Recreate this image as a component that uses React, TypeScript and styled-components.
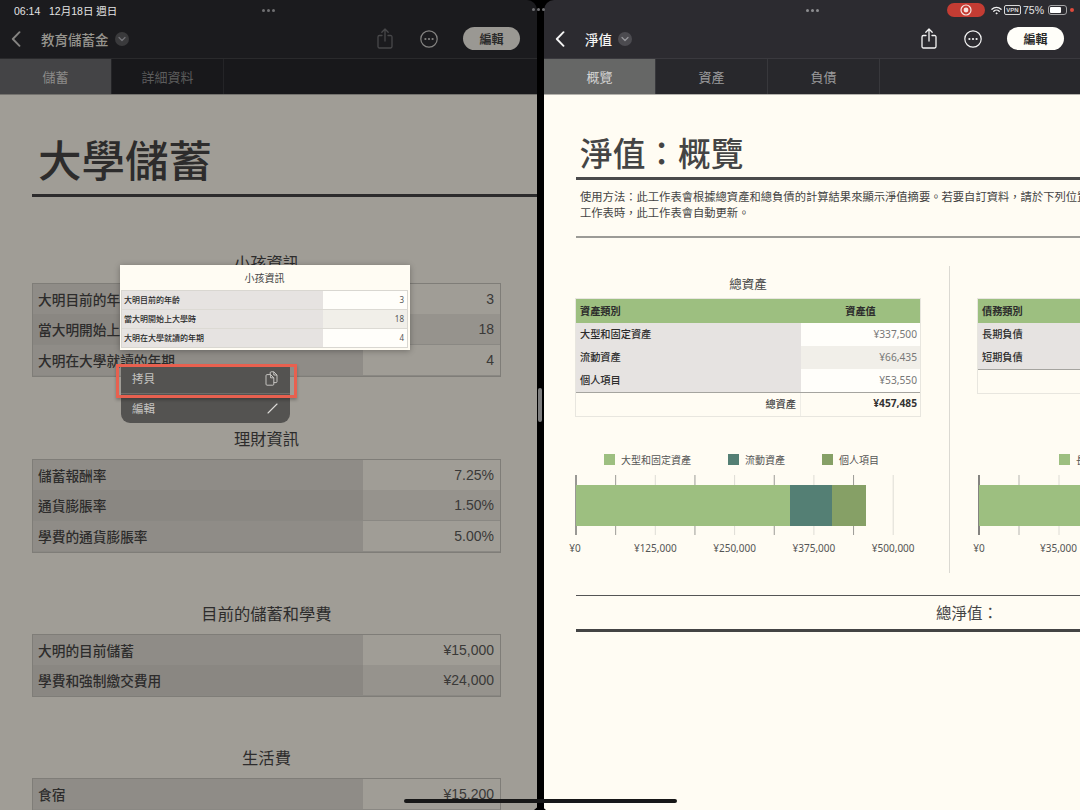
import React from 'react'
import styled, { createGlobalStyle } from 'styled-components'

const GlobalStyle = createGlobalStyle`
  html, body {
    margin: 0;
    padding: 0;
    background: #000;
  }
  * {
    box-sizing: border-box;
  }
`

const font = `"Liberation Sans", "Noto Sans CJK TC", sans-serif`
const cjk = `"Noto Sans CJK TC", "Noto Sans", sans-serif`

const Screen = styled.div`
  position: relative;
  display: flex;
  width: 1080px;
  height: 810px;
  overflow: hidden;
  background: #000;
  font-family: ${cjk};
`

const Pane = styled.div<{ $dim?: boolean }>`
  display: flex;
  flex-direction: column;
  flex: ${p => (p.$dim ? '0 0 537px' : '1 1 0')};
  min-width: 0;
  overflow: hidden;
  border-radius: ${p => (p.$dim ? '0 10px 0 0' : '10px 0 0 0')};
  background: ${p => (p.$dim ? '#1b1b1e' : '#2c2b30')};
`

const Gutter = styled.div`
  flex: 0 0 7px;
  background: #000;
`

const StatusRow = styled.div<{ $dim?: boolean }>`
  display: grid;
  grid-template-columns: 1fr auto 1fr;
  align-items: center;
  height: 20px;
  padding: 0 ${p => (p.$dim ? '14px' : '6px')};
  color: #e4e4e4;
  font-family: ${font};
  font-size: 10.5px;
`

const DotRow = styled.div<{ $dim?: boolean }>`
  display: flex;
  gap: 2px;
  & > i {
    width: 3px;
    height: 3px;
    border-radius: 50%;
    background: ${p => (p.$dim ? '#6f6f72' : '#8d8d90')};
  }
`

const StatusRight = styled.div`
  display: flex;
  align-items: center;
  justify-content: flex-end;
  gap: 2px;
`

const RecPill = styled.div`
  display: flex;
  align-items: center;
  justify-content: center;
  width: 38px;
  height: 14px;
  margin-right: 4px;
  border-radius: 7px;
  background: #c43c33;
`

const VpnTag = styled.span`
  display: inline-block;
  width: 17px;
  height: 10px;
  border: 1px solid #d8d8d8;
  border-radius: 2px;
  color: #d8d8d8;
  font-size: 6px;
  font-weight: 700;
  line-height: 8px;
  text-align: center;
`

const Battery = styled.div`
  position: relative;
  width: 19px;
  height: 10px;
  margin-left: 2px;
  padding: 1px;
  border: 1px solid #a5a5a7;
  border-radius: 3px;
  & > i {
    display: block;
    width: 75%;
    height: 100%;
    border-radius: 1px;
    background: #fff;
  }
`

const ChargeDot = styled.i`
  width: 4px;
  height: 4px;
  margin-left: 1px;
  border-radius: 50%;
  background: #e24a3b;
`

const NavBar = styled.div<{ $dim?: boolean }>`
  display: flex;
  align-items: center;
  height: 39px;
  padding: 0 ${p => (p.$dim ? '17px' : '16px')} 1px 11px;
  border-bottom: 1px solid ${p => (p.$dim ? '#2a2a2c' : '#3a393e')};
  color: ${p => (p.$dim ? '#97958f' : '#f4f4f4')};
`

const NavTitle = styled.div`
  margin-left: 20px;
  font-size: 13.5px;
  font-weight: 500;
  white-space: nowrap;
`

const NavChip = styled.div<{ $dim?: boolean }>`
  display: flex;
  align-items: center;
  justify-content: center;
  width: 14px;
  height: 14px;
  margin-left: 6px;
  border-radius: 50%;
  background: ${p => (p.$dim ? '#3a3a3c' : '#4c4b50')};
`

const NavActions = styled.div`
  display: flex;
  align-items: center;
  gap: 25px;
  margin-left: auto;
  & > svg:first-child {
    margin-right: 2px;
  }
`

const EditButton = styled.div<{ $dim?: boolean }>`
  width: 57px;
  height: 23px;
  border-radius: 12px;
  background: ${p => (p.$dim ? '#9a9893' : '#fffef9')};
  color: #2b2b2b;
  font-size: 12px;
  font-weight: 700;
  line-height: 23px;
  text-align: center;
`

const TabBar = styled.div<{ $dim?: boolean }>`
  display: flex;
  height: 36px;
  border-bottom: 1px solid ${p => (p.$dim ? '#74726e' : '#b5b3ad')};
  background: ${p => (p.$dim ? '#18181b' : '#28282c')};
`

const Tab = styled.div<{ $dim?: boolean; $active?: boolean }>`
  width: 112px;
  border-right: 1px solid ${p => (p.$dim ? '#242427' : '#38383c')};
  background: ${p =>
    p.$active ? (p.$dim ? '#444446' : '#666766') : 'transparent'};
  color: ${p =>
    p.$dim
      ? p.$active ? '#8d8c8a' : '#5c5c5c'
      : p.$active ? '#d4d4d4' : '#9b9b9c'};
  font-size: 13px;
  line-height: 35px;
  text-align: center;
`

const LeftSheet = styled.div`
  flex: 1;
  padding-top: 34px;
  overflow: hidden;
  background: #a09d96;
  color: #2d2c2c;
`

const BigTitle = styled.h1`
  margin: 0 0 5px 38px;
  font-size: 43.5px;
  font-weight: 500;
  line-height: 60px;
`

const HeavyRule = styled.div`
  height: 3px;
  margin-left: 32px;
  background: #2c2b2c;
`

const SectionTitle = styled.div<{ $top: number }>`
  width: 469px;
  margin: ${p => p.$top}px 0 9px 32px;
  font-size: 16.3px;
  line-height: 24px;
  text-align: center;
`

const DimTable = styled.div`
  width: 469px;
  margin-left: 32px;
  border: 1px solid #7f7d78;
`

const DimRow = styled.div<{ $even?: boolean }>`
  display: grid;
  grid-template-columns: 330px 1fr;
  height: 31px;
  margin-top: -0.33px;
  border-bottom: 1px solid #8a8883;
  font-size: 13.7px;
  line-height: 30px;
  & > div:first-child {
    padding-left: 5px;
    background: ${p => (p.$even ? '#8a8782' : '#8f8c87')};
    font-weight: 500;
  }
  & > div:last-child {
    padding-right: 6px;
    background: ${p => (p.$even ? '#96938d' : '#a09d96')};
    color: #3a3938;
    font-family: ${font};
    font-size: 14px;
    text-align: right;
  }
`

const RightSheet = styled.div`
  flex: 1;
  padding: 32px 0 0 31px;
  overflow: hidden;
  background: #fffcf3;
  color: #444;
`

const SheetTitle = styled.h1`
  margin: 0 0 0 5px;
  font-size: 32.7px;
  font-weight: 500;
  line-height: 50px;
  white-space: nowrap;
`

const ThickLine = styled.div`
  width: 560px;
  height: 3px;
  margin-left: 1px;
  background: #4a4a4a;
`

const Intro = styled.p`
  width: 560px;
  margin: 8px 0 0 5px;
  font-size: 11.3px;
  line-height: 16px;
  white-space: nowrap;
`

const ThinLine = styled.div`
  width: 560px;
  height: 2px;
  margin: 16px 0 0 1px;
  background: #9c9b96;
`

const Columns = styled.div`
  display: flex;
  margin-top: 28px;
`

const Column = styled.div`
  flex: 0 0 346px;
  padding-top: 9px;
`

const ColumnRule = styled.div`
  flex: 0 0 1px;
  height: 307px;
  margin: 0 27px 0 28px;
  background: #dbd9d2;
`

const ColumnTitle = styled.div`
  font-size: 12.5px;
  line-height: 18px;
  text-align: center;
`

const AssetTable = styled.div`
  margin: 5px 0 0;
  border: 1px solid #e8e6df;
  font-size: 10.2px;
`

const AssetHead = styled.div`
  display: grid;
  grid-template-columns: 225px 1fr;
  height: 24px;
  background: #9dbf80;
  color: #2c2c2c;
  font-weight: 700;
  line-height: 23px;
  & > div:first-child {
    padding-left: 4px;
  }
  & > div:last-child {
    text-align: center;
  }
`

const AssetRow = styled.div<{ $even?: boolean }>`
  display: grid;
  grid-template-columns: 225px 1fr;
  height: 23px;
  line-height: 22px;
  & > div:first-child {
    padding-left: 4px;
    background: #e6e3e1;
    color: #2c2c2c;
    font-weight: 500;
  }
  & > div:last-child {
    padding-right: 3px;
    background: ${p => (p.$even ? '#f1efe9' : '#fffefa')};
    color: #777;
    font-family: "Noto Sans", sans-serif;
    text-align: right;
  }
`

const AssetTotal = styled.div`
  display: grid;
  grid-template-columns: 225px 1fr;
  height: 24px;
  border-top: 1px solid #a5a49f;
  line-height: 21px;
  & > div {
    padding-right: 3px;
    text-align: right;
  }
  & > div:first-child {
    padding-right: 4px;
    border-right: 1px solid #efede6;
    color: #444;
    font-weight: 500;
  }
  & > div:last-child {
    color: #333;
    font-family: "Noto Sans", sans-serif;
    font-weight: 700;
  }
`

const Legend = styled.div<{ $left: number; $top: number }>`
  display: flex;
  gap: 37px;
  height: 14px;
  margin: ${p => p.$top}px 0 4px ${p => p.$left}px;
  white-space: nowrap;
`

const LegendItem = styled.div<{ $color: string }>`
  display: flex;
  align-items: center;
  gap: 6px;
  color: #555;
  font-size: 10px;
  &::before {
    content: '';
    width: 11px;
    height: 11px;
    background: ${p => p.$color};
  }
`

const Chart = styled.svg`
  display: block;
  overflow: visible;
`

const AxisLabel = styled.text`
  fill: #555;
  font-family: "Noto Sans", sans-serif;
  font-size: 10px;
  text-anchor: middle;
`

const NetBlock = styled.div`
  width: 782px;
  margin: 22px 0 0 1px;
  border-top: 1.5px solid #555;
  border-bottom: 3px solid #444;
  font-size: 15.5px;
  line-height: 33px;
  text-align: center;
`

// things that float over the panes
const CenterDots = styled(DotRow)`
  position: absolute;
  top: 8px;
  left: 532px;
`

const Popover = styled.div`
  position: absolute;
  top: 265px;
  left: 120px;
  width: 290px;
  height: 85px;
  padding: 0 2px 0 1px;
  background: #fffcf3;
  box-shadow: 0 1px 6px rgba(0, 0, 0, 0.3);
  color: #444;
`

const PopoverTitle = styled.div`
  font-size: 10px;
  line-height: 25px;
  text-align: center;
`

const PopoverTable = styled.div`
  border: 1px solid #d9d7d1;
`

const PopoverRow = styled.div<{ $even?: boolean }>`
  display: grid;
  grid-template-columns: 201px 1fr;
  height: 19px;
  border-bottom: 1px solid #dcdad4;
  font-size: 8px;
  line-height: 18px;
  & > div:first-child {
    padding-left: 2px;
    background: #e6e3e1;
    color: #2a2a2a;
    font-weight: 500;
  }
  & > div:last-child {
    padding-right: 3px;
    background: ${p => (p.$even ? '#f1efe9' : '#fffefa')};
    color: #555;
    font-family: "Noto Sans", sans-serif;
    text-align: right;
  }
  &:last-child {
    height: 18px;
    border-bottom: 0;
  }
`

const Menu = styled.div`
  position: absolute;
  top: 366px;
  left: 121px;
  width: 169px;
  height: 57px;
  border-radius: 0 0 9px 9px;
  background: #545351;
  color: #c4c3c0;
  font-size: 11.5px;
`

const MenuRow = styled.div<{ $first?: boolean }>`
  display: flex;
  align-items: center;
  justify-content: space-between;
  height: ${p => (p.$first ? '28px' : '29px')};
  padding: 0 12px ${p => (p.$first ? '3px' : '1px')} 11px;
  border-bottom: ${p => (p.$first ? '1px solid #6d6c69' : '0')};
`

const Highlight = styled.div`
  position: absolute;
  top: 364px;
  left: 116px;
  width: 181px;
  height: 34px;
  border: 3px solid #e8604f;
  box-shadow: 0 2px 3px rgba(0, 0, 0, 0.25);
`

const DragHandle = styled.div`
  position: absolute;
  top: 388px;
  left: 538px;
  width: 4px;
  height: 34px;
  border-radius: 2px;
  background: #7d7d7d;
`

const HomeBar = styled.div`
  position: absolute;
  top: 799px;
  left: 404px;
  width: 273px;
  height: 4px;
  border-radius: 2px;
  background: #171717;
`

const GutterFoot = styled.div`
  position: absolute;
  top: 805px;
  left: 534px;
  width: 0;
  height: 0;
  border-right: 6.5px solid transparent;
  border-bottom: 5px solid #000;
  border-left: 6.5px solid transparent;
`

const BackIcon = ({ color }: { color: string }) => (
  <svg width="10" height="16" viewBox="0 0 10 16" fill="none">
    <path d="M8.5 1.2 1.8 8l6.7 6.8" stroke={color} strokeWidth="1.9" strokeLinecap="round" strokeLinejoin="round" />
  </svg>
)

const ChipIcon = ({ color }: { color: string }) => (
  <svg width="8" height="6" viewBox="0 0 8 6" fill="none">
    <path d="M1 1.5 4 4.5 7 1.5" stroke={color} strokeWidth="1.2" strokeLinecap="round" strokeLinejoin="round" />
  </svg>
)

const ShareIcon = ({ color }: { color: string }) => (
  <svg width="16" height="21" viewBox="0 0 16 21" fill="none" stroke={color} strokeWidth="1.3" strokeLinecap="round" strokeLinejoin="round">
    <path d="M5 7.5H2.4A1.4 1.4 0 0 0 1 8.9v9.7A1.4 1.4 0 0 0 2.4 20h11.2a1.4 1.4 0 0 0 1.4-1.4V8.9a1.4 1.4 0 0 0-1.4-1.4H11" />
    <path d="M8 13V1.2M4.8 4.2 8 1l3.2 3.2" />
  </svg>
)

const MoreIcon = ({ color }: { color: string }) => (
  <svg width="18" height="18" viewBox="0 0 18 18" fill="none">
    <circle cx="9" cy="9" r="8.2" stroke={color} strokeWidth="1.2" />
    <circle cx="5.4" cy="9" r="1.1" fill={color} />
    <circle cx="9" cy="9" r="1.1" fill={color} />
    <circle cx="12.6" cy="9" r="1.1" fill={color} />
  </svg>
)

const WifiIcon = () => (
  <svg width="11" height="9" viewBox="0 0 12 9" fill="none" stroke="#f2f2f2" strokeLinecap="round">
    <path d="M1 3.2a7.2 7.2 0 0 1 10 0" strokeWidth="1.4" />
    <path d="M3 5.3a4.3 4.3 0 0 1 6 0" strokeWidth="1.4" />
    <circle cx="6" cy="7.6" r="0.7" fill="#f2f2f2" strokeWidth="0.6" />
  </svg>
)

const RecIcon = () => (
  <svg width="12" height="12" viewBox="0 0 12 12" fill="none">
    <circle cx="6" cy="6" r="5" stroke="#f6e4e0" strokeWidth="1.2" />
    <circle cx="6" cy="6" r="2.4" fill="#f6e4e0" />
  </svg>
)

const CopyIcon = () => (
  <svg width="13" height="15" viewBox="0 0 13 15" fill="none" stroke="#d0cfcc" strokeWidth="0.9" strokeLinejoin="round">
    <path d="M1 4.6c0-.6.4-1 1-1h3.6L8.8 6.8v6.4c0 .6-.4 1-1 1H2c-.6 0-1-.4-1-1z" />
    <path d="M5.2 3.6V1.8c0-.6.4-1 1-1h2.6L12 4v6.6c0 .6-.4 1-1 1H8.8" />
    <path d="M5.6 3.6v3.2h3.2M8.8 .8V4H12" />
  </svg>
)

const PencilIcon = () => (
  <svg width="11" height="11" viewBox="0 0 11 11" fill="none">
    <path d="M1 10 10 1" stroke="#dddcd9" strokeWidth="1.1" strokeLinecap="round" />
  </svg>
)

const Status = ({ dim }: { dim?: boolean }) => (
  <StatusRow $dim={dim}>
    <div>{dim ? '06:14\u00a0\u00a0\u00a012月18日 週日' : ''}</div>
    <DotRow $dim={dim}><i /><i /><i /></DotRow>
    {dim ? <div /> : (
      <StatusRight>
        <RecPill><RecIcon /></RecPill>
        <WifiIcon />
        <VpnTag>VPN</VpnTag>
        <span>75%</span>
        <Battery><i /></Battery>
        <ChargeDot />
      </StatusRight>
    )}
  </StatusRow>
)

const Nav = ({ title, dim }: { title: string; dim?: boolean }) => {
  const tone = dim ? '#858482' : '#f4f4f4'
  return (
    <NavBar $dim={dim}>
      <BackIcon color={tone} />
      <NavTitle>{title}</NavTitle>
      <NavChip $dim={dim}><ChipIcon color={dim ? '#75757a' : '#98989c'} /></NavChip>
      <NavActions>
        <ShareIcon color={dim ? '#48484a' : '#f4f4f4'} />
        <MoreIcon color={tone} />
        <EditButton $dim={dim}>編輯</EditButton>
      </NavActions>
    </NavBar>
  )
}

const Tabs = ({ items, dim }: { items: string[]; dim?: boolean }) => (
  <TabBar $dim={dim}>
    {items.map((item, i) => (
      <Tab key={item} $dim={dim} $active={i === 0}>{item}</Tab>
    ))}
  </TabBar>
)

const leftSections = [
  {
    title: '小孩資訊',
    top: 53,
    rows: [['大明目前的年齡', '3'], ['當大明開始上大學時', '18'], ['大明在大學就讀的年期', '4']],
  },
  {
    title: '理財資訊',
    top: 49,
    rows: [['儲蓄報酬率', '7.25%'], ['通貨膨脹率', '1.50%'], ['學費的通貨膨脹率', '5.00%']],
  },
  {
    title: '目前的儲蓄和學費',
    top: 48,
    rows: [['大明的目前儲蓄', '¥15,000'], ['學費和強制繳交費用', '¥24,000']],
  },
  {
    title: '生活費',
    top: 48,
    rows: [['食宿', '¥15,200'], ['其他', '¥3,000']],
  },
]

const popoverRows = leftSections[0].rows

const assets = [
  ['大型和固定資產', '¥337,500'],
  ['流動資產', '¥66,435'],
  ['個人項目', '¥53,550'],
]

const debts = [
  ['長期負債', '¥60,000'],
  ['短期負債', '¥12,000'],
]

const GREEN = '#9dbf80'
const TEAL = '#547f74'
const OLIVE = '#86a066'

const AssetChart = () => {
  const step = 39.65
  return (
    <Chart width="346" height="90" viewBox="0 0 346 90">
      {Array.from({ length: 9 }, (_, i) => (
        <line
          key={i}
          x1={1 + i * step}
          x2={1 + i * step}
          y1="5"
          y2="65"
          stroke={i === 0 ? '#555' : i % 2 ? '#9c9b96' : '#dedcd5'}
          strokeWidth={i === 0 ? 1.2 : 1}
        />
      ))}
      <rect x="1" y="15" width="214" height="41" fill={GREEN} />
      <rect x="215" y="15" width="42" height="41" fill={TEAL} />
      <rect x="257" y="15" width="34" height="41" fill={OLIVE} />
      {['¥0', '¥125,000', '¥250,000', '¥375,000', '¥500,000'].map((label, i) => (
        <AxisLabel key={label} x={1 + i * step * 2 - (i === 0 ? 1 : 0)} y="82">{label}</AxisLabel>
      ))}
    </Chart>
  )
}

const DebtChart = () => {
  const step = 40
  return (
    <Chart width="346" height="90" viewBox="0 0 346 90">
      {Array.from({ length: 9 }, (_, i) => (
        <line
          key={i}
          x1={2 + i * step}
          x2={2 + i * step}
          y1="5"
          y2="65"
          stroke={i === 0 ? '#333' : i % 2 ? '#b5b4af' : '#dedcd5'}
          strokeWidth={i === 0 ? 1.2 : 1}
        />
      ))}
      <rect x="2" y="15" width="250" height="41" fill={GREEN} />
      {['¥0', '¥35,000', '¥70,000', '¥105,000'].map((label, i) => (
        <AxisLabel key={label} x={2 + i * 79.5} y="82">{label}</AxisLabel>
      ))}
    </Chart>
  )
}

export default function App() {
  return (
    <>
      <GlobalStyle />
      <Screen>
        <Pane $dim>
          <Status dim />
          <Nav title="教育儲蓄金" dim />
          <Tabs items={['儲蓄', '詳細資料']} dim />
          <LeftSheet>
            <BigTitle>大學儲蓄</BigTitle>
            <HeavyRule />
            {leftSections.map(section => (
              <React.Fragment key={section.title}>
                <SectionTitle $top={section.top}>{section.title}</SectionTitle>
                <DimTable>
                  {section.rows.map(([label, value], i) => (
                    <DimRow key={label} $even={i % 2 === 1}>
                      <div>{label}</div>
                      <div>{value}</div>
                    </DimRow>
                  ))}
                </DimTable>
              </React.Fragment>
            ))}
          </LeftSheet>
        </Pane>
        <Gutter />
        <Pane>
          <Status />
          <Nav title="淨值" />
          <Tabs items={['概覽', '資產', '負債']} />
          <RightSheet>
            <SheetTitle>{'淨值\uff1a概覽'}</SheetTitle>
            <ThickLine />
            <Intro>
              {'使用方法\uff1a此工作表會根據總資產和總負債的計算結果來顯示淨值摘要。若要自訂資料\uff0c請於下列位置更新'}
              <br />
              {'工作表時\uff0c此工作表會自動更新。'}
            </Intro>
            <ThinLine />
            <Columns>
              <Column>
                <ColumnTitle>總資產</ColumnTitle>
                <AssetTable>
                  <AssetHead><div>資產類別</div><div>資產值</div></AssetHead>
                  {assets.map(([label, value], i) => (
                    <AssetRow key={label} $even={i === 1}>
                      <div>{label}</div>
                      <div>{value}</div>
                    </AssetRow>
                  ))}
                  <AssetTotal><div>總資產</div><div>¥457,485</div></AssetTotal>
                </AssetTable>
                <Legend $left={29} $top={35}>
                  <LegendItem $color={GREEN}>大型和固定資產</LegendItem>
                  <LegendItem $color={TEAL}>流動資產</LegendItem>
                  <LegendItem $color={OLIVE}>個人項目</LegendItem>
                </Legend>
                <AssetChart />
              </Column>
              <ColumnRule />
              <Column>
                <ColumnTitle>總負債</ColumnTitle>
                <AssetTable>
                  <AssetHead><div>債務類別</div><div>負債值</div></AssetHead>
                  {debts.map(([label, value], i) => (
                    <AssetRow key={label} $even={i === 1}>
                      <div>{label}</div>
                      <div>{value}</div>
                    </AssetRow>
                  ))}
                  <AssetTotal><div>總負債</div><div>¥72,000</div></AssetTotal>
                </AssetTable>
                <Legend $left={82} $top={58}>
                  <LegendItem $color={GREEN}>長期負債</LegendItem>
                  <LegendItem $color={TEAL}>短期負債</LegendItem>
                </Legend>
                <DebtChart />
              </Column>
            </Columns>
            <NetBlock>{'總淨值\uff1a'}</NetBlock>
          </RightSheet>
        </Pane>

        <CenterDots $dim><i /><i /><i /></CenterDots>
        <DragHandle />
        <Menu>
          <MenuRow $first><span>拷貝</span><CopyIcon /></MenuRow>
          <MenuRow><span>編輯</span><PencilIcon /></MenuRow>
        </Menu>
        <Highlight />
        <Popover>
          <PopoverTitle>小孩資訊</PopoverTitle>
          <PopoverTable>
            {popoverRows.map(([label, value], i) => (
              <PopoverRow key={label} $even={i === 1}>
                <div>{label}</div>
                <div>{value}</div>
              </PopoverRow>
            ))}
          </PopoverTable>
        </Popover>
        <HomeBar />
        <GutterFoot />
      </Screen>
    </>
  )
}
